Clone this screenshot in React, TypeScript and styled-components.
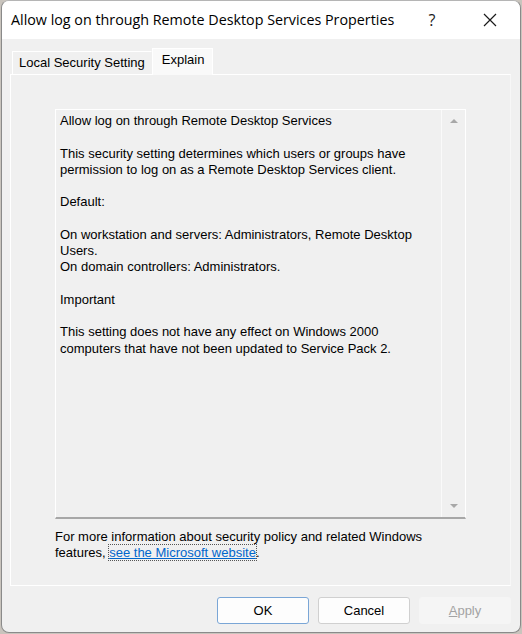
import React from "react";
import styled, { createGlobalStyle } from "styled-components";

const Global = createGlobalStyle`
  html, body { margin: 0; padding: 0; }
  body {
    background: #c9c4bd;
    width: 522px;
    height: 634px;
    overflow: hidden;
    font-family: "Liberation Sans", Arial, sans-serif;
  }
`;

const Window = styled.div`
  margin-left: 1px;
  width: 518px;
  height: 631px;
  border: 1px solid #8a8a8a;
  border-top-color: #b5b5b5;
  border-radius: 8px;
  background: #f0f0f0;
  overflow: hidden;
  display: flex;
  flex-direction: column;
`;

const TitleBar = styled.div`
  height: 38px;
  flex: none;
  background: #ffffff;
  display: flex;
  align-items: center;
  padding-left: 9px;
  padding-right: 1px;
`;

const Title = styled.div`
  flex: 1;
  font-family: "Open Sans", "Noto Sans", sans-serif;
  font-size: 14.3px;
  color: #000;
  padding-bottom: 1px;
`;

const TitleButton = styled.div`
  width: 58px;
  height: 38px;
  display: flex;
  align-items: center;
  justify-content: center;
  font-family: "Open Sans", sans-serif;
  font-size: 16px;
  color: #1a1a1a;
`;

const Body = styled.div`
  flex: 1;
  display: flex;
  flex-direction: column;
  padding: 8px 9px 0 8px;
`;

const TabRow = styled.div`
  display: flex;
  align-items: flex-end;
  height: 27px;
  padding-left: 2px;
  position: relative;
  z-index: 1;
`;

const Tab = styled.div<{ $active?: boolean }>`
  box-sizing: border-box;
  height: ${(p) => (p.$active ? "27px" : "23px")};
  margin-bottom: ${(p) => (p.$active ? "-1px" : "0")};
  padding: ${(p) => (p.$active ? "3px 8px 0 9px" : "3px 6px 0 6px")};
  background: ${(p) => (p.$active ? "#f9f9f9" : "#f0f0f0")};
  border: 1px solid #ffffff;
  border-bottom: none;
  border-right-color: ${(p) => (p.$active ? "#ffffff" : "#f0f0f0")};
  font-size: 13px;
  color: #000;
  line-height: 16px;
`;

const Panel = styled.div`
  box-sizing: border-box;
  height: 512px;
  background: #f0f0f0;
  border: 1px solid #ffffff;
  border-right-color: #f7f7f7;
  padding: 34px 44px 0 44px;
  display: flex;
  flex-direction: column;
`;

const TextBox = styled.div`
  box-sizing: border-box;
  height: 410px;
  border: 1px solid #ffffff;
  border-bottom: 2px solid #a7a7a7;
  display: flex;
`;

const TextArea = styled.div`
  flex: 1;
  padding: 3px 4px 0 4px;
  font-size: 13px;
  line-height: 16.25px;
  color: #000;
`;

const Para = styled.p`
  margin: 0 0 16.25px 0;
`;

const ScrollBar = styled.div`
  width: 23px;
  border-left: 1px solid #fafafa;
  display: flex;
  flex-direction: column;
  justify-content: space-between;
  align-items: center;
  padding: 9px 0 9px 0;
`;

const Arrow = styled.div<{ $down?: boolean }>`
  width: 0;
  height: 0;
  border-left: 4px solid transparent;
  border-right: 4px solid transparent;
  ${(p) =>
    p.$down
      ? "border-top: 4px solid #a8a8a8;"
      : "border-bottom: 4px solid #a8a8a8;"}
`;

const Footer = styled.div`
  margin-top: 10px;
  font-size: 13px;
  line-height: 15.5px;
  color: #000;
`;

const Link = styled.a`
  color: #0066cc;
  text-decoration: underline;
  outline: 1px dotted #555;
  outline-offset: 0px;
`;

const Buttons = styled.div`
  display: flex;
  justify-content: flex-end;
  gap: 9px;
  padding: 11px 0 0 0;
`;

const Button = styled.div<{ $default?: boolean; $disabled?: boolean }>`
  box-sizing: border-box;
  width: 92px;
  height: 27px;
  display: flex;
  align-items: center;
  justify-content: center;
  font-size: 13px;
  border-radius: 3px;
  background: ${(p) => (p.$disabled ? "#f5f5f5" : "#fdfdfd")};
  border: 1px solid
    ${(p) => (p.$default ? "#7aa6d6" : p.$disabled ? "#f5f5f5" : "#d0d0d0")};
  color: ${(p) => (p.$disabled ? "#a3a3a3" : "#000")};
`;

const U = styled.span`
  text-decoration: underline;
`;

export default function App() {
  return (
    <>
      <Global />
      <Window>
        <TitleBar>
          <Title>Allow log on through Remote Desktop Services Properties</Title>
          <TitleButton>?</TitleButton>
          <TitleButton>
            <svg width="14" height="14" viewBox="0 0 14 14">
              <path d="M1 1 L13 13 M13 1 L1 13" stroke="#1a1a1a" strokeWidth="1.2" />
            </svg>
          </TitleButton>
        </TitleBar>
        <Body>
          <TabRow>
            <Tab>Local Security Setting</Tab>
            <Tab $active>Explain</Tab>
          </TabRow>
          <Panel>
            <TextBox>
              <TextArea>
                <Para>Allow log on through Remote Desktop Services</Para>
                <Para>
                  This security setting determines which users or groups have
                  <br />
                  permission to log on as a Remote Desktop Services client.
                </Para>
                <Para>Default:</Para>
                <Para>
                  On workstation and servers: Administrators, Remote Desktop
                  <br />
                  Users.
                  <br />
                  On domain controllers: Administrators.
                </Para>
                <Para>Important</Para>
                <Para>
                  This setting does not have any effect on Windows 2000
                  <br />
                  computers that have not been updated to Service Pack 2.
                </Para>
              </TextArea>
              <ScrollBar>
                <Arrow />
                <Arrow $down />
              </ScrollBar>
            </TextBox>
            <Footer>
              For more information about security policy and related Windows
              <br />
              features, <Link>see the Microsoft website</Link>.
            </Footer>
          </Panel>
          <Buttons>
            <Button $default>OK</Button>
            <Button>Cancel</Button>
            <Button $disabled>
              <U>A</U>pply
            </Button>
          </Buttons>
        </Body>
      </Window>
    </>
  );
}
